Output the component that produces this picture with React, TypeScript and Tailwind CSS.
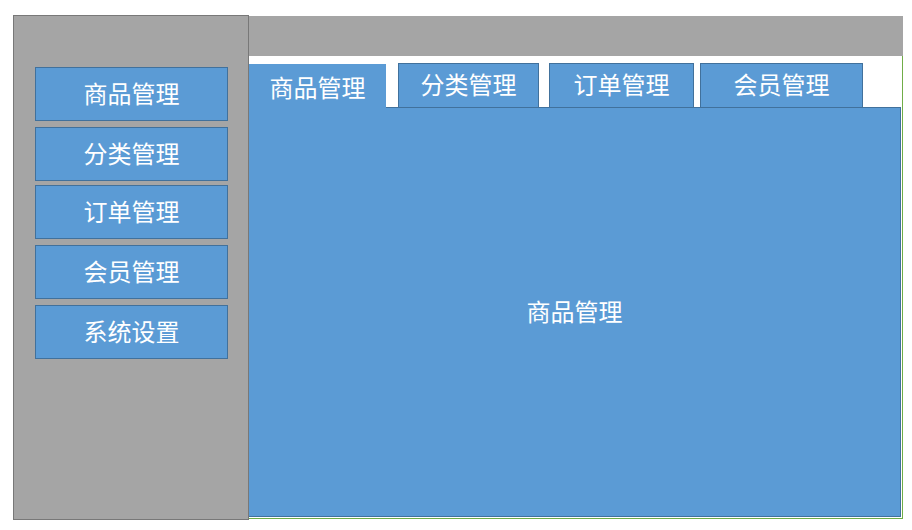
import React, { useState } from "react";

const menus = ["商品管理", "分类管理", "订单管理", "会员管理", "系统设置"];
// gaps between sidebar buttons in the mockup aren't perfectly even
const menuGaps = ["mt-0", "mt-[6px]", "mt-[4px]", "mt-[6px]", "mt-[6px]"];

const tabs = [
  { name: "商品管理", w: "w-[137px]", ml: "ml-0" },
  { name: "分类管理", w: "w-[141px]", ml: "ml-[12px]" },
  { name: "订单管理", w: "w-[145px]", ml: "ml-[10px]" },
  { name: "会员管理", w: "w-[163px]", ml: "ml-[6px]" },
];

const App: React.FC = () => {
  const [active, setActive] = useState(0);

  return (
    <div
      className="w-[912px] h-[530px] bg-white flex pl-[13px] pt-[15px] overflow-hidden text-white"
      style={{ fontFamily: '"Microsoft YaHei", "Noto Sans CJK SC", sans-serif' }}
    >
      {/* Sidebar */}
      <aside className="w-[236px] h-[505px] shrink-0 bg-[#a5a5a5] border border-[#787878] pl-[21px] pt-[51px] flex flex-col">
        {menus.map((m, i) => (
          <button
            key={m}
            className={`${menuGaps[i]} w-[193px] h-[54px] shrink-0 bg-[#5b9bd5] border border-[#41719c] flex items-center justify-center pb-[3px] text-[24px] leading-none`}
          >
            {m}
          </button>
        ))}
      </aside>

      {/* Main */}
      <div className="w-[654px] mt-px flex flex-col">
        <div className="h-[40px] bg-[#a5a5a5]" />
        <div className="h-[463px] border-r border-b border-[#70ad47] pt-[7px] pr-px pb-px flex flex-col">
          {/* Tabs */}
          <div className="h-[44px] flex items-end">
            {tabs.map((t, i) =>
              i === active ? (
                <button
                  key={t.name}
                  onClick={() => setActive(i)}
                  className={`${t.w} ${t.ml} h-[44px] -mb-px relative z-10 bg-[#5b9bd5] flex items-center justify-center pt-px text-[24px] leading-none`}
                >
                  {t.name}
                </button>
              ) : (
                <button
                  key={t.name}
                  onClick={() => setActive(i)}
                  className={`${t.w} ${t.ml} h-[44px] bg-[#5b9bd5] border border-b-0 border-[#41719c] flex items-center justify-center pb-[3px] text-[24px] leading-none`}
                >
                  {t.name}
                </button>
              )
            )}
          </div>
          {/* Content */}
          <div className="flex-1 bg-[#5b9bd5] border border-l-0 border-[#41719c] flex items-center justify-center pb-[2px] text-[24px] leading-none">
            {tabs[active].name}
          </div>
        </div>
      </div>
    </div>
  );
};

export default App;
